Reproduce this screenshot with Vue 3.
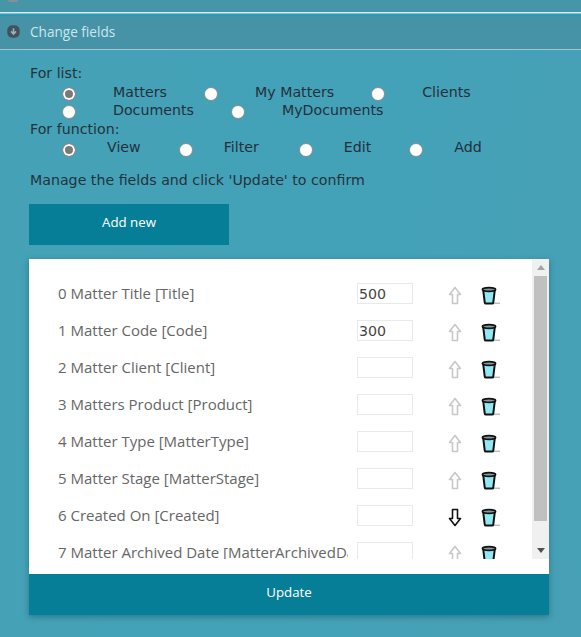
<script setup>
const lists = [
  { name: 'Matters', on: true },
  { name: 'My Matters' },
  { name: 'Clients' },
  { name: 'Documents' },
  { name: 'MyDocuments' }
]
const fns = [{ name: 'View', on: true }, { name: 'Filter' }, { name: 'Edit' }, { name: 'Add' }]
const rows = [
  { label: '0 Matter Title [Title]', value: '500' },
  { label: '1 Matter Code [Code]', value: '300' },
  { label: '2 Matter Client [Client]', value: '' },
  { label: '3 Matters Product [Product]', value: '' },
  { label: '4 Matter Type [MatterType]', value: '' },
  { label: '5 Matter Stage [MatterStage]', value: '' },
  { label: '6 Created On [Created]', value: '', down: true },
  { label: '7 Matter Archived Date [MatterArchivedDate]', value: '' }
]
</script>

<template>
  <div class="page">
    <div class="top-bar"><span class="top-icon"></span></div>
    <div class="rule-white"></div>
    <div class="rule-teal"></div>
    <header class="section-head">
      <svg class="head-icon" width="13" height="13" viewBox="0 0 13 13">
        <rect x="0.3" y="0.3" width="12.400" height="12.400" rx="5" fill="#44505a" />
        <path d="M6.500 3.200v5.600M4 6.400l2.500 2.600 2.500-2.600" fill="none" stroke="#8fb6c2" stroke-width="1.600" />
      </svg>
      <span>Change fields</span>
    </header>

    <main class="content">
      <div class="caption">For list:</div>
      <div class="radios list-radios">
        <label v-for="item in lists" :key="item.name" class="radio">
          <span class="dot" :class="{ on: item.on }"></span>
          <span class="radio-text">{{ item.name }}</span>
        </label>
      </div>
      <div class="caption fn-caption">For function:</div>
      <div class="radios fn-radios">
        <label v-for="item in fns" :key="item.name" class="radio">
          <span class="dot" :class="{ on: item.on }"></span>
          <span class="radio-text">{{ item.name }}</span>
        </label>
      </div>
      <p class="hint">Manage the fields and click 'Update' to confirm</p>
      <button class="btn add-btn">Add new</button>

      <section class="card">
        <div class="scroller">
          <div class="rows">
            <div v-for="row in rows" :key="row.label" class="row">
              <span class="row-label">{{ row.label }}</span>
              <div class="row-input">{{ row.value }}</div>
              <svg class="arrow" :class="{ down: row.down }" width="14" height="19" viewBox="0 0 14 19">
                <path d="M7 1.500 1.500 8.500h3v9h5v-9h3z" fill="#fff" stroke="#c8c8c8" stroke-width="1.600" stroke-linejoin="round" />
              </svg>
              <svg class="glass" width="20" height="19" viewBox="0 0 20 19">
                <path d="M12 17.300h7" stroke="#bdbdbd" stroke-width="1.500" />
                <path d="M2.200 4 3.700 16.300c.1.900.6 1.300 1.300 1.300h6c.7 0 1.200-.4 1.300-1.300L13.800 4z" fill="#8fe8f2" stroke="#111" stroke-width="2" />
                <ellipse cx="8" cy="3.500" rx="6.600" ry="1.900" fill="#7f9a9e" stroke="#111" stroke-width="1.700" />
              </svg>
            </div>
          </div>
          <div class="scrollbar">
            <span class="caret up"></span>
            <div class="track"><div class="thumb"></div></div>
            <span class="caret dn"></span>
          </div>
        </div>
        <div class="card-gap"></div>
        <button class="btn update-btn">Update</button>
      </section>
    </main>
  </div>
</template>

<style scoped>
.page {
  width: 581px;
  height: 637px;
  overflow: hidden;
  background: linear-gradient(100deg, #45a1b6 0%, #43a2b8 55%, #47a0b5 100%);
  font-family: "DejaVu Sans", sans-serif;
  font-size: 14.2px;
  color: #23343c;
}
.top-bar {
  height: 12px;
  background: #4695a9;
  padding-left: 8px;
}
.top-icon {
  display: block;
  width: 10px;
  height: 2px;
  background: #8a8f93;
  border-radius: 0 0 3px 3px;
}
.rule-white { height: 1px; background: #dcebef; }
.rule-teal { height: 3px; background: linear-gradient(#3fa0bb, #1596b8); border-top: 1px solid #7cc0d0; box-sizing: border-box; }
.section-head {
  height: 34px;
  box-sizing: border-box;
  display: flex;
  align-items: center;
  gap: 10px;
  padding: 0 0 3px 7px;
  background: #4693a7;
  border-bottom: 1px solid #a5c6cf;
  color: #cbe7ee;
  font-family: "Open Sans", sans-serif;
  font-size: 13.6px;
}
.head-icon { flex: none; }
.content { padding: 14px 32px 0 29px; }
.caption { height: 19px; line-height: 18px; padding-left: 1px; }
.fn-caption { padding-top: 1px; height: 18px; }
.radios { display: flex; flex-wrap: wrap; padding-left: 33px; width: 470px; color: #25303c; }
.radio { display: flex; align-items: flex-start; height: 18px; }
.radio-text { line-height: 18px; margin-right: 37px; }
.dot {
  flex: none;
  width: 12px;
  height: 12px;
  margin-top: 4px;
  border-radius: 50%;
  background: #fff;
  border: 1px solid #8c8c8c;
}
.dot.on { background: #7a7a7a; box-shadow: inset 0 0 0 2px #fff; }
.list-radios .dot { margin-right: 37px; }
.fn-radios .dot { margin-right: 31px; margin-top: 5px; }
.fn-radios .radio { height: 19px; }
.fn-radios .radio-text { margin-right: 38px; }
.fn-radios .radio:nth-child(2) .radio-text { margin-right: 40px; }
.hint { margin: 14px 0 0 1px; line-height: 18px; }
.btn {
  display: block;
  border: 0;
  background: #077e98;
  color: #fff;
  font-family: "Open Sans", sans-serif;
  font-size: 13.3px;
  padding: 0;
  text-align: center;
}
.add-btn { width: 200px; height: 41px; margin-top: 15px; padding-bottom: 5px; }
.card {
  margin-top: 14px;
  width: 520px;
  background: #fff;
  box-shadow: 0 2px 6px rgba(0, 40, 60, 0.35);
}
.scroller { height: 300px; display: flex; overflow: hidden; }
.rows { flex: 1; min-width: 0; padding-top: 16px; }
.row {
  display: flex;
  align-items: center;
  height: 37px;
  padding-left: 29px;
}
.row-label {
  width: 290px;
  flex: none;
  padding-bottom: 1px;
  white-space: nowrap;
  overflow: hidden;
  font-family: "Open Sans", sans-serif;
  font-size: 15px;
  color: #666;
}
.row-input {
  flex: none;
  width: 56px;
  height: 21px;
  margin-left: 9px;
  box-sizing: border-box;
  border: 1px solid #e9e9e9;
  padding-left: 1px;
  line-height: 21px;
  color: #444;
}
.arrow { flex: none; margin: 3px 0 0 35px; }
.arrow.down { transform: scaleY(-1); }
.arrow.down path { stroke: #111; }
.glass { flex: none; margin: 3px 0 0 19px; }
.scrollbar {
  flex: none;
  width: 17px;
  background: #f0f0f0;
  display: flex;
  flex-direction: column;
  align-items: center;
}
.track { flex: 1; width: 100%; padding: 0 2px; box-sizing: border-box; }
.thumb { height: 245px; background: #c0c0c0; }
.caret { flex: none; width: 0; height: 0; border-left: 4px solid transparent; border-right: 4px solid transparent; }
.caret.up { margin: 6px 0; border-bottom: 5px solid #a3a3a3; }
.caret.dn { margin: 6px 0; border-top: 5px solid #505050; }
.card-gap { height: 15px; }
.update-btn { width: 100%; height: 41px; padding-bottom: 5px; }
</style>
